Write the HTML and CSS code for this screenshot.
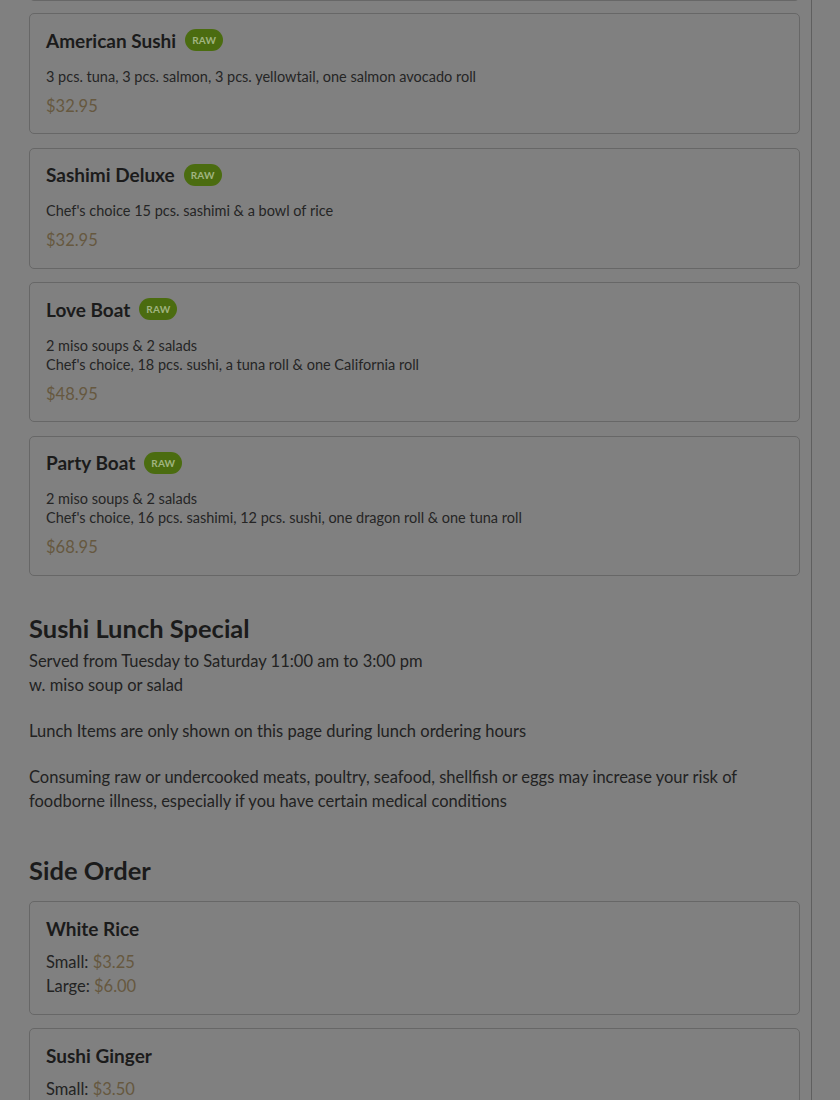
FILE: index.html
```html
<!DOCTYPE html>
<html lang="en">
<head>
<meta charset="utf-8">
<title>Menu</title>
<link rel="stylesheet" href="styles.css">
</head>
<body>
<div class="page">
  <main class="menu">
    <div class="item item--clipped" aria-hidden="true"></div>

    <div class="item">
      <div class="item-head"><h3 class="item-name">American Sushi</h3><span class="badge">RAW</span></div>
      <p class="item-desc">3 pcs. tuna, 3 pcs. salmon, 3 pcs. yellowtail, one salmon avocado roll</p>
      <p class="item-price">$32.95</p>
    </div>

    <div class="item">
      <div class="item-head"><h3 class="item-name">Sashimi Deluxe</h3><span class="badge">RAW</span></div>
      <p class="item-desc">Chef's choice 15 pcs. sashimi &amp; a bowl of rice</p>
      <p class="item-price">$32.95</p>
    </div>

    <div class="item">
      <div class="item-head"><h3 class="item-name">Love Boat</h3><span class="badge">RAW</span></div>
      <p class="item-desc">2 miso soups &amp; 2 salads<br>Chef's choice, 18 pcs. sushi, a tuna roll &amp; one California roll</p>
      <p class="item-price">$48.95</p>
    </div>

    <div class="item">
      <div class="item-head"><h3 class="item-name">Party Boat</h3><span class="badge">RAW</span></div>
      <p class="item-desc">2 miso soups &amp; 2 salads<br>Chef's choice, 16 pcs. sashimi, 12 pcs. sushi, one dragon roll &amp; one tuna roll</p>
      <p class="item-price">$68.95</p>
    </div>

    <section class="section">
      <h2 class="section-title section-title--tight">Sushi Lunch Special</h2>
      <p class="note">Served from Tuesday to Saturday 11:00 am to 3:00 pm<br>w. miso soup or salad</p>
      <p class="note">Lunch Items are only shown on this page during lunch ordering hours</p>
      <p class="note">Consuming raw or undercooked meats, poultry, seafood, shellfish or eggs may increase your risk of foodborne illness, especially if you have certain medical conditions</p>
    </section>

    <section class="section">
      <h2 class="section-title">Side Order</h2>
      <div class="item">
        <div class="item-head item-head--plain"><h3 class="item-name">White Rice</h3></div>
        <p class="size">Small: <span class="amount">$3.25</span></p>
        <p class="size">Large: <span class="amount">$6.00</span></p>
      </div>
      <div class="item">
        <div class="item-head item-head--plain"><h3 class="item-name">Sushi Ginger</h3></div>
        <p class="size">Small: <span class="amount">$3.50</span></p>
        <p class="size">Large: <span class="amount">$6.50</span></p>
      </div>
    </section>
  </main>
</div>
</body>
</html>
```
FILE: styles.css
```css
html, body {
  margin: 0;
  padding: 0;
  background: #808080;
}

body {
  font-family: Lato, "Open Sans", sans-serif;
  color: #222222;
  overflow: hidden;
  height: 1100px;
}

.page {
  width: 811px;
  border-right: 1px solid #5f5f5f;
  min-height: 1100px;
}

.menu {
  padding: 0 11px 40px 29px;
}

.item {
  border: 1px solid #676767;
  border-radius: 5px;
  padding: 14.5px 16px 15.5px;
  margin-bottom: 13.5px;
}

.item--clipped {
  margin-top: -106px;
  height: 75px;
  margin-bottom: 12px;
}

.item-head {
  display: flex;
  align-items: center;
  gap: 9px;
  height: 23px;
  margin-bottom: 15px;
}

.item-head--plain {
  margin-bottom: 10.5px;
}

.item-name {
  margin: 0;
  font-size: 19px;
  font-weight: 700;
  color: #1b1b1b;
  line-height: 23px;
}

.badge {
  display: inline-flex;
  align-items: center;
  height: 22px;
  padding: 0 7px;
  border-radius: 11px;
  background: #4b6c10;
  color: #a0b480;
  font-size: 10px;
  font-weight: 700;
  letter-spacing: 0.2px;
}

.item-desc {
  margin: 0;
  font-size: 14.5px;
  line-height: 19px;
  color: #252525;
}

.item-price {
  margin: 8px 0 0;
  font-size: 16.5px;
  line-height: 24px;
  color: #66583f;
}

.size {
  margin: 0;
  font-size: 16.5px;
  line-height: 24px;
  color: #232323;
}

.amount {
  color: #66583f;
}

.section {
  margin-top: 37px;
}

.section + .section {
  margin-top: 42.5px;
}

.section-title {
  margin: 0 0 16px;
  font-size: 25.5px;
  line-height: 30px;
  font-weight: 700;
  color: #1b1b1b;
}

.section-title--tight {
  margin-bottom: 6px;
}

.note {
  margin: 0 0 22px;
  font-size: 16.5px;
  line-height: 24px;
  color: #222222;
}
```
